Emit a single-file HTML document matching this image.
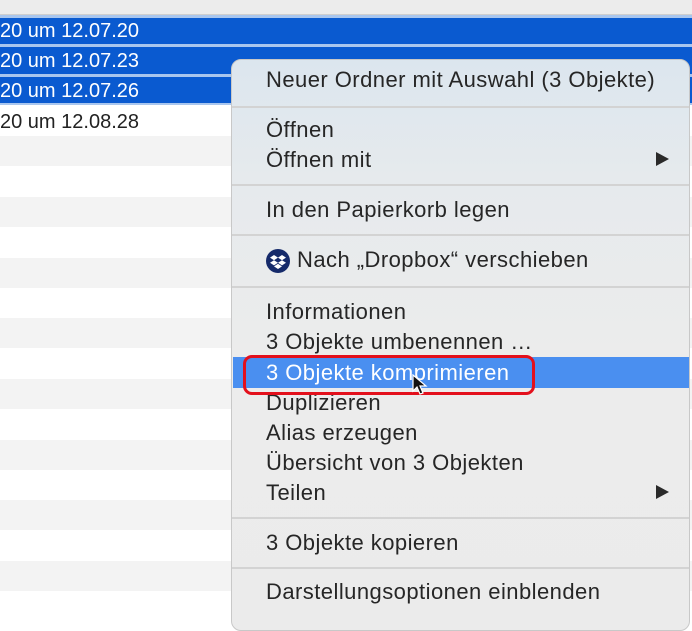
<!DOCTYPE html><html><head><style>
body{margin:0;width:692px;height:617px;overflow:hidden;background:#fff;font-family:"Liberation Sans",sans-serif;position:relative}
.a{position:absolute}
.row{position:absolute;left:0;width:692px;height:30px}
.t{position:absolute;left:266px;font-size:22px;letter-spacing:0.45px;color:#262626;line-height:24px;white-space:nowrap}
.sep{position:absolute;left:232px;width:457px;height:2px;background:#d3d3d3}
.arr{position:absolute;left:656px;width:0;height:0;border-left:13px solid #2a2a2a;border-top:7px solid transparent;border-bottom:7px solid transparent}
</style></head><body>
<div class="a" style="left:0;top:0;width:692px;height:14px;background:#ececec;border-bottom:2px solid #cfcfcf"></div>
<div class="a" style="left:0;top:15px;width:692px;height:90px;background:#a9c6ee"></div>
<div class="a" style="left:0;top:18px;width:692px;height:26px;background:#0a5ad0"></div>
<div class="a" style="left:0;top:47px;width:692px;height:27px;background:#0a5ad0"></div>
<div class="a" style="left:0;top:77px;width:692px;height:26px;background:#0a5ad0"></div>
<div class="a" style="left:0;top:19px;font-size:20px;color:#fff;line-height:24px">20 um 12.07.20</div>
<div class="a" style="left:0;top:49px;font-size:20px;color:#fff;line-height:24px">20 um 12.07.23</div>
<div class="a" style="left:0;top:79px;font-size:20px;color:#fff;line-height:24px">20 um 12.07.26</div>
<div class="a" style="left:0;top:110px;font-size:20px;color:#222;line-height:24px">20 um 12.08.28</div>
<div class="row" style="top:136px;background:#f3f3f3"></div>
<div class="row" style="top:197px;background:#f3f3f3"></div>
<div class="row" style="top:258px;background:#f3f3f3"></div>
<div class="row" style="top:318px;background:#f3f3f3"></div>
<div class="row" style="top:379px;background:#f3f3f3"></div>
<div class="row" style="top:440px;background:#f3f3f3"></div>
<div class="row" style="top:500px;background:#f3f3f3"></div>
<div class="row" style="top:561px;background:#f3f3f3"></div>
<div class="a" style="left:231px;top:59px;width:457px;height:570px;border-radius:10px;background:linear-gradient(#dce6ee,#e6eaed 120px,#ececec 300px,#ebebeb);border:1px solid #c8c8c8"></div>
<div class="a" style="left:233px;top:357px;width:456px;height:31px;background:#4a8ff0"></div>
<div class="sep" style="top:106px"></div>
<div class="sep" style="top:184px"></div>
<div class="sep" style="top:234px"></div>
<div class="sep" style="top:286px"></div>
<div class="sep" style="top:517px"></div>
<div class="sep" style="top:567px"></div>
<div class="t" style="top:68px">Neuer Ordner mit Auswahl (3 Objekte)</div>
<div class="t" style="top:118px">Öffnen</div>
<div class="t" style="top:148px">Öffnen mit</div><div class="arr" style="top:152px"></div>
<div class="t" style="top:198px">In den Papierkorb legen</div>
<svg class="a" style="left:265px;top:248px" width="26" height="26" viewBox="0 0 26 26"><circle cx="13" cy="13" r="12" fill="#152a6a"/><path d="M9 7l-4 2.6 4 2.6 4-2.6zM17 7l-4 2.6 4 2.6 4-2.6zM9 12.2l-4 2.6 4 2.6 4-2.6zM17 12.2l-4 2.6 4 2.6 4-2.6zM9 18.4l4 2.6 4-2.6-4-2.6z" fill="#fff"/></svg>
<div class="t" style="top:248px;left:297px">Nach „Dropbox“ verschieben</div>
<div class="t" style="top:300px">Informationen</div>
<div class="t" style="top:330px">3 Objekte umbenennen …</div>
<div class="t" style="top:361px;color:#fff">3 Objekte komprimieren</div>
<div class="t" style="top:391px">Duplizieren</div>
<div class="t" style="top:421px">Alias erzeugen</div>
<div class="t" style="top:451px">Übersicht von 3 Objekten</div>
<div class="t" style="top:481px">Teilen</div><div class="arr" style="top:485px"></div>
<div class="t" style="top:531px">3 Objekte kopieren</div>
<div class="t" style="top:580px">Darstellungsoptionen einblenden</div>
<div class="a" style="left:243px;top:355px;width:286px;height:34px;border:3px solid #e3101c;border-radius:9px"></div>
<svg class="a" style="left:412px;top:374px" width="16" height="22" viewBox="0 0 16 22"><path d="M1 1v16l4-4 3 7 3-1-3-7h6z" fill="#111" stroke="#fff" stroke-width="1.2"/></svg>
</body></html>
